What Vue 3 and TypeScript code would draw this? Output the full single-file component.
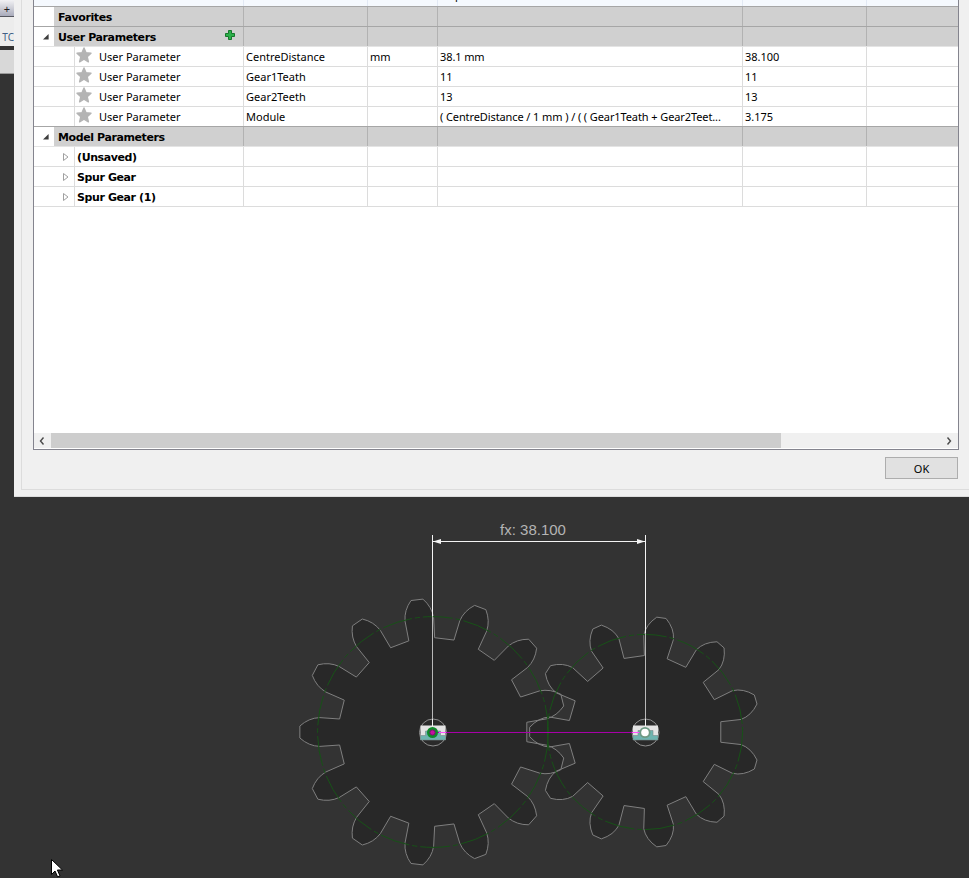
<script setup lang="ts">
interface Row {
  kind: 'group' | 'param' | 'model'
  label: string
  expander?: boolean
  add?: boolean
  name?: string
  unit?: string
  expr?: string
  value?: string
}

const rows: Row[] = [
  { kind: 'group', label: 'Favorites' },
  { kind: 'group', label: 'User Parameters', expander: true, add: true },
  { kind: 'param', label: 'User Parameter', name: 'CentreDistance', unit: 'mm', expr: '38.1 mm', value: '38.100' },
  { kind: 'param', label: 'User Parameter', name: 'Gear1Teath', expr: '11', value: '11' },
  { kind: 'param', label: 'User Parameter', name: 'Gear2Teeth', expr: '13', value: '13' },
  { kind: 'param', label: 'User Parameter', name: 'Module', expr: '( CentreDistance / 1 mm ) / ( ( Gear1Teath + Gear2Teet...', value: '3.175' },
  { kind: 'group', label: 'Model Parameters', expander: true },
  { kind: 'model', label: '(Unsaved)' },
  { kind: 'model', label: 'Spur Gear' },
  { kind: 'model', label: 'Spur Gear (1)' },
]

interface Shape { root: number; pitch: number; ctrl: number; tip: number }

function gearPath(cx: number, cy: number, teeth: number, r: number, s: Shape): string {
  const rr = r - 22
  const ra = r + 17.75
  const rc = r + (ra - r) * 0.5
  const rp = r - 2
  const pt = (ang: number, a: number, t: number) => {
    const x = cx + a * Math.cos(ang) - t * Math.sin(ang)
    const y = cy + a * Math.sin(ang) + t * Math.cos(ang)
    return `${x.toFixed(2)} ${y.toFixed(2)}`
  }
  let d = ''
  for (let i = 0; i < teeth; i++) {
    const ang = Math.PI + (i * 2 * Math.PI) / teeth
    d += `${i === 0 ? 'M' : 'L'}${pt(ang, rr, -s.root)} `
    d += `L${pt(ang, rp, -s.pitch)} `
    d += `Q${pt(ang, rc, -s.ctrl)} ${pt(ang, ra, -s.tip)} `
    d += `L${pt(ang, ra, s.tip)} `
    d += `Q${pt(ang, rc, s.ctrl)} ${pt(ang, rp, s.pitch)} `
    d += `L${pt(ang, rr, s.root)} `
  }
  return d + 'Z'
}

const gearA = gearPath(433, 732, 13, 115.4, { root: 13, pitch: 14.4, ctrl: 14, tip: 6 })
const gearB = gearPath(645, 732, 11, 97.6, { root: 11.5, pitch: 15, ctrl: 14.4, tip: 4.7 })
</script>

<template>
  <div class="app">
    <div class="upper">
      <aside class="side">
        <div class="side-btn">+</div>
        <div class="side-tab"><span>TC</span></div>
        <div class="side-gap"></div>
        <div class="side-bar"></div>
      </aside>
      <section class="dialog">
        <div class="frame">
          <div class="table">
            <div class="head">
              <div class="hc first"></div>
              <div class="hc"></div>
              <div class="hc"></div>
              <div class="hc"><span class="clip">Expression</span></div>
              <div class="hc"></div>
              <div class="hc last"></div>
            </div>
            <div v-for="row in rows" :key="row.label + row.name" class="row" :class="row.kind">
              <div class="gutter">
                <svg v-if="row.expander" class="exp" width="6" height="6" viewBox="0 0 6 6">
                  <path d="M5.6 0L5.6 5.6L0 5.6Z" fill="#3c3c3c" />
                </svg>
                <svg v-if="row.kind === 'model'" class="tri" width="6" height="8" viewBox="0 0 6 8">
                  <path d="M.5 .5L5 4L.5 7.5Z" fill="#fff" stroke="#a0a0a0" />
                </svg>
              </div>
              <div class="cell name-cell">
                <svg v-if="row.kind === 'param'" class="star" width="16" height="16" viewBox="0 0 16 16">
                  <path
                    d="M8 1L10 5.8L15 6.3L11.2 9.6L12.4 14.8L8 12.1L3.6 14.8L4.8 9.6L1 6.3L6 5.8Z"
                    fill="#b4b4b4"
                    stroke="#b4b4b4"
                    stroke-width="1.4"
                    stroke-linejoin="round"
                  />
                </svg>
                <span class="label">{{ row.label }}</span>
                <svg v-if="row.add" class="plus" width="10" height="10" viewBox="0 0 10 10">
                  <path d="M3.5 .5H6.5V3.5H9.5V6.5H6.5V9.5H3.5V6.5H.5V3.5H3.5Z" fill="#2cb04a" stroke="#16782c" />
                </svg>
              </div>
              <div class="cell">{{ row.name }}</div>
              <div class="cell">{{ row.unit }}</div>
              <div class="cell expr">{{ row.expr }}</div>
              <div class="cell">{{ row.value }}</div>
              <div class="cell end"></div>
            </div>
            <div class="filler"></div>
            <div class="scroll">
              <svg class="chev" width="8" height="10" viewBox="0 0 8 10">
                <path d="M5.5 1.5L2.5 5L5.5 8.5" fill="none" stroke="#4a4a4a" stroke-width="1.4" />
              </svg>
              <div class="track"><div class="thumb"></div></div>
              <svg class="chev" width="8" height="10" viewBox="0 0 8 10">
                <path d="M2.5 1.5L5.5 5L2.5 8.5" fill="none" stroke="#4a4a4a" stroke-width="1.4" />
              </svg>
            </div>
          </div>
          <div class="actions">
            <button class="ok" type="button">OK</button>
          </div>
        </div>
      </section>
    </div>

    <svg class="canvas" width="969" height="381" viewBox="0 497 969 381">
      <path :d="gearA" fill="#282828" />
      <path :d="gearB" fill="#282828" />
      <path :d="gearA" fill="none" stroke="#7f7f7f" />
      <path :d="gearB" fill="none" stroke="#7f7f7f" />
      <g fill="none" stroke="#175217" stroke-dasharray="30 3 5 3">
        <circle cx="433" cy="732" r="115.4" />
        <circle cx="645" cy="732" r="97.6" />
      </g>

      <g fill="#2a2a2a" stroke="#8e8e8e">
        <circle cx="433" cy="732.5" r="13.5" />
        <circle cx="645.5" cy="732.5" r="13.5" />
      </g>
      <g>
        <path d="M420.5 725.5H445.5V740H420.5Z" fill="#e4e4e4" />
        <path d="M420.5 735.5H425.5V731H440.5V735.5H445.5V740H420.5Z" fill="#6eb4b0" stroke="#7a8a8a" stroke-width=".6" />
        <path d="M633 725.5H658V740H633Z" fill="#e4e4e4" />
        <path d="M633 735.5H638V730.5H653V735.5H658V740H633Z" fill="#6eb4b0" stroke="#7a8a8a" stroke-width=".6" />
      </g>

      <g stroke-width="1" fill="none">
        <path d="M432.5 535V616M645.5 535V633" stroke="#f4f4f4" />
        <path d="M432.5 616V719M645.5 633V719" stroke="#b8b8b8" />
        <path d="M432.5 719V726M645.5 719V726" stroke="#f4f4f4" />
        <path d="M433 541.5H645" stroke="#f4f4f4" />
      </g>
      <path d="M433 541.5L441 539V544ZM645 541.5L637 539V544Z" fill="#f4f4f4" />
      <text class="dim" x="533" y="535" text-anchor="middle">fx: 38.100</text>

      <path d="M433 732.5H645" stroke="#a800a8" />
      <path d="M439 732.5H446M632 732.5H640" stroke="#ff50ff" />

      <circle cx="432.5" cy="732.5" r="5.5" fill="#0f8a2a" />
      <circle cx="432.5" cy="732.5" r="2.6" fill="#c80fa0" stroke="#7a1570" />
      <circle cx="645" cy="732.5" r="5.6" fill="#6e9a84" />
      <circle cx="645" cy="732.5" r="3.8" fill="#ffffff" />

      <path d="M51.5 859.5V874.5L55 871L57.6 876.8L60 875.8L57.4 870H62.5Z" fill="#ffffff" stroke="#000000" stroke-width="1" />
    </svg>
  </div>
</template>

<style>
html, body { margin: 0; padding: 0; background: #333333; }
</style>

<style scoped>
.app {
  width: 969px;
  height: 878px;
  overflow: hidden;
  background: #333333;
  display: flex;
  flex-direction: column;
  font-family: "Noto Sans", sans-serif;
  font-size: 11px;
  color: #000;
}
.upper { height: 497px; display: flex; flex: none; }
.side { width: 14px; flex: none; display: flex; flex-direction: column; }
.side-btn {
  height: 16px;
  background: linear-gradient(#f2f2f4, #a9abbb);
  border-bottom: 1px solid #55575f;
  text-align: center;
  font-size: 11px;
  line-height: 18px;
  color: #222;
}
.side-tab {
  height: 29px;
  background: #ececec;
  display: flex;
  justify-content: flex-end;
  align-items: center;
  overflow: hidden;
  color: #3f5f86;
  font-size: 10px;
  padding-top: 11px;
  box-sizing: border-box;
}
.side-gap { height: 4px; background: #333; }
.side-bar { height: 24px; background: #d8d8d8; border-bottom: 1px solid #9a9a9a; box-sizing: border-box; }

.dialog {
  flex: 1;
  background: #f0f0f0;
  border-bottom: 1px solid #dcdcdc;
  box-sizing: border-box;
  padding: 0 0 6px 7px;
}
.frame {
  height: 100%;
  border-left: 1px solid #dcdcdc;
  border-bottom: 1px solid #dcdcdc;
  box-sizing: border-box;
  padding: 0 10px 0 11px;
  display: flex;
  flex-direction: column;
}
.table {
  height: 450px;
  background: #fff;
  border: 1px solid #84848e;
  border-top: 0;
  box-sizing: border-box;
  display: flex;
  flex-direction: column;
}
.head {
  height: 7px;
  flex: none;
  display: grid;
  grid-template-columns: 210px 124px 70px 305px 124px 1fr;
  background: #f5f9fe;
  overflow: hidden;
}
.hc { border-right: 1px solid #e2e9f4; overflow: hidden; }
.hc.last { border-right: 0; }
.clip { display: block; line-height: 12px; margin-top: -11px; padding-left: 5px; }

.row {
  height: 20px;
  flex: none;
  display: grid;
  grid-template-columns: 210px 124px 70px 305px 124px 1fr;
  box-sizing: border-box;
  border-bottom: 1px solid #dcdcdc;
  position: relative;
  line-height: 19px;
}
.gutter { position: absolute; left: 0; top: 0; }
.exp { position: absolute; left: 9px; top: 7px; }
.tri { position: absolute; left: 29px; top: 6px; }
.cell {
  border-right: 1px solid #dcdcdc;
  padding-left: 2px;
  white-space: nowrap;
  overflow: hidden;
  box-sizing: border-box;
  height: 19px;
}
.cell.end { border-right: 0; }
.expr { letter-spacing: -0.1px; }
.name-cell { position: relative; margin-left: 40px; border-left: 1px solid #dcdcdc; }

.group { background: transparent; box-shadow: 0 -1px 0 #a6a6a6; border-bottom-color: #e4e4e4; font-weight: 700; font-family: "DejaVu Sans", sans-serif; font-size: 11px; letter-spacing: -0.4px; }
.group .cell { background: #d0d0d0; border-right-color: #b2b2b2; padding-top: 1px; }
.group .name-cell { margin-left: 20px; padding-left: 4px; border-left: 0; position: relative; }
.model .name-cell { font-weight: 700; padding-left: 2px; padding-top: 1px; font-family: "DejaVu Sans", sans-serif; font-size: 11px; letter-spacing: -0.4px; }
.param .name-cell { padding-left: 24px; }
.param .cell:not(.name-cell) { padding-left: 2px; }
.star { position: absolute; left: 1px; top: 0; }
.plus { position: absolute; left: 171px; top: 3px; }

.filler { flex: 1; }
.scroll { height: 15px; flex: none; display: flex; align-items: center; background: #f0f0f0; margin-bottom: 1px; }
.chev { flex: none; margin: 0 5px 0 4px; }
.track { flex: 1; height: 15px; }
.thumb { width: 730px; height: 100%; background: #cdcdcd; }

.actions { display: flex; justify-content: flex-end; padding: 7px 1px 0 0; }
.ok {
  width: 73px;
  height: 22px;
  margin: 0;
  padding: 0;
  background: #e1e1e1;
  border: 1px solid #adadad;
  font: inherit;
  color: #000;
}
.canvas { display: block; flex: none; }
.dim { font-family: "Liberation Sans", sans-serif; font-size: 15px; fill: #b4b4b4; }
</style>
